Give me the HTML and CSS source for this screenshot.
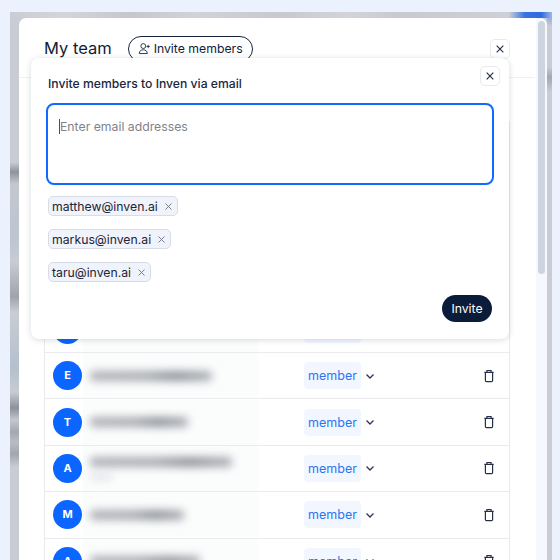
FILE: index.html
```html
<html>
  <head>
    <meta charset="UTF-8" />
    <link rel="stylesheet" href="styles.css">
  </head>
  <body>
    <svg class="defs">
      <symbol id="i-x" viewBox="0 0 12 12"><path d="M2 2l8 8M10 2l-8 8" /></symbol>
      <symbol id="i-chevron" viewBox="0 0 12 12"><path d="M2.5 4.5L6 8l3.5-3.5" /></symbol>
      <symbol id="i-trash" viewBox="0 0 14 16"><path d="M1.5 3.7h11M4.6 3.500V1.600h4.800v1.900M2.800 3.700v9.600c0 .8.500 1.300 1.300 1.300h5.800c.8 0 1.300-.5 1.300-1.300V3.700" /></symbol>
    </svg>

    <div class="backdrop">
      <div class="modal">
        <div class="modal-body">
          <div class="header">
            <div class="heading">My team</div>
            <button class="invite-open">
              <svg class="user-plus" viewBox="0 0 16 16"><circle cx="6.500" cy="5" r="3" /><path d="M1.500 14.200c0-3 2.200-4.600 5-4.600s5 1.600 5 4.600zM12.500 3.500v4M10.500 5.500h4" /></svg>
              Invite members
            </button>
            <button class="close-btn"><svg class="icon-x"><use href="#i-x" /></svg></button>
          </div>

          <div class="table">
            <div class="row">
              <div class="avatar">A</div>
              <div class="name"></div>
              <div class="role">member</div>
              <svg class="chevron"><use href="#i-chevron" /></svg>
              <svg class="trash"><use href="#i-trash" /></svg>
            </div>
            <div class="row">
              <div class="avatar">E</div>
              <div class="name"><span class="smudge" style="width: 122px"></span></div>
              <div class="role">member</div>
              <svg class="chevron"><use href="#i-chevron" /></svg>
              <svg class="trash"><use href="#i-trash" /></svg>
            </div>
            <div class="row">
              <div class="avatar">T</div>
              <div class="name"><span class="smudge" style="width: 98px"></span></div>
              <div class="role">member</div>
              <svg class="chevron"><use href="#i-chevron" /></svg>
              <svg class="trash"><use href="#i-trash" /></svg>
            </div>
            <div class="row">
              <div class="avatar">A</div>
              <div class="name">
                <span class="smudge" style="width: 142px"></span>
                <span class="smudge smudge-small" style="width: 22px"></span>
              </div>
              <div class="role">member</div>
              <svg class="chevron"><use href="#i-chevron" /></svg>
              <svg class="trash"><use href="#i-trash" /></svg>
            </div>
            <div class="row">
              <div class="avatar">M</div>
              <div class="name"><span class="smudge" style="width: 94px"></span></div>
              <div class="role">member</div>
              <svg class="chevron"><use href="#i-chevron" /></svg>
              <svg class="trash"><use href="#i-trash" /></svg>
            </div>
            <div class="row">
              <div class="avatar">A</div>
              <div class="name"><span class="smudge" style="width: 110px"></span></div>
              <div class="role">member</div>
              <svg class="chevron"><use href="#i-chevron" /></svg>
              <svg class="trash"><use href="#i-trash" /></svg>
            </div>
          </div>
        </div>

        <div class="track"><div class="thumb"></div></div>

        <div class="panel">
          <div class="panel-top">
            <div class="panel-title">Invite members to Inven via email</div>
            <button class="close-btn"><svg class="icon-x"><use href="#i-x" /></svg></button>
          </div>
          <div class="email-box"><span class="caret"></span><span class="placeholder">Enter email addresses</span></div>
          <div class="tags">
            <div class="tag">matthew@inven.ai <svg class="tag-x"><use href="#i-x" /></svg></div>
            <div class="tag">markus@inven.ai <svg class="tag-x"><use href="#i-x" /></svg></div>
            <div class="tag">taru@inven.ai <svg class="tag-x"><use href="#i-x" /></svg></div>
          </div>
          <div class="panel-bottom"><button class="invite-send">Invite</button></div>
        </div>
      </div>
    </div>
  </body>
</html>
```

FILE: styles.css
```css
html, body {
  margin: 0;
  padding: 0;
  height: 560px;
  overflow: hidden;
  background: #ebf1fd;
  font-family: Inter, "Liberation Sans", sans-serif;
  color: #0f1d36;
}

button {
  font-family: inherit;
  cursor: pointer;
}

svg path {
  fill: none;
}

.defs {
  display: none;
}

.backdrop {
  margin: 12px 8px 0 10px;
  height: 548px;
  padding: 6px 5px 0 9px;
  box-sizing: border-box;
  background-color: #c9cdd3;
  background-image:
    linear-gradient(90deg, #c9cdd3 0, #d3d5da 10%, #c4c8ce 22%, #d0d3d8 34%, #c6cad0 50%, #d2d4d9 62%, #c7cbd1 72%, #cdd0d6 92%, #3a72de 95%, #2f6be0 98%, #9db5e4 100%),
    linear-gradient(180deg, #c9cdd3 0, #c9cdd3 150px, #8e939b 160px, #c4c8cd 172px, #bcc5d2 225px, #c8ccd2 250px, #a0a4aa 285px, #c9cdd3 300px, #b4c0ce 356px, #c8ccd2 380px, #8c919b 396px, #c4c7cd 408px, #a3a7ae 420px, #b9bdc3 430px, #a2a6ad 442px, #c9cdd3 455px),
    linear-gradient(180deg, #6f95e2 0, #c9cdd3 14px, #c9cdd3 55px, #a4a8ae 65px, #c9cdd3 80px);
  background-size: 100% 6px, 9px 100%, 5px 100%;
  background-position: 0 0, 0 0, 100% 0;
  background-repeat: no-repeat;
}

.modal {
  position: relative;
  display: flex;
  height: 560px;
  background: #fff;
  border-radius: 7px 7px 0 0;
  overflow: hidden;
}

.modal-body {
  flex: 1;
  padding: 0 26px 0 25px;
  min-width: 0;
}

.track {
  width: 11px;
  background: #f5f8ff;
  padding: 3px 2px 0;
  box-sizing: border-box;
}

.thumb {
  width: 7px;
  height: 253px;
  border-radius: 4px;
  background: #cdd5e0;
}

.header {
  height: 60px;
  margin: 0 -25px;
  padding: 0 25px;
  display: flex;
  align-items: flex-start;
  border-bottom: 1.500px solid #eef0f3;
  box-sizing: border-box;
}

.heading {
  font-size: 16.500px;
  line-height: 24px;
  margin-top: 18px;
  margin-right: 16px;
}

.invite-open {
  display: flex;
  align-items: center;
  gap: 3px;
  height: 26px;
  margin-top: 18px;
  padding: 0 9px 1px;
  background: #fff;
  border: 1px solid #17233f;
  border-radius: 13px;
  font-size: 12.250px;
  color: #0f1d36;
}

.user-plus {
  width: 13px;
  height: 13px;
}

.user-plus circle, .user-plus path {
  fill: none;
  stroke: #1b2740;
  stroke-width: 1.100;
}

.close-btn {
  display: flex;
  align-items: center;
  justify-content: center;
  width: 20px;
  height: 20px;
  padding: 0;
  background: #fff;
  border: 1px solid #e8eaee;
  border-radius: 5px;
}

.header .close-btn {
  margin-left: auto;
  margin-top: 21px;
}

.icon-x {
  width: 10px;
  height: 10px;
  stroke: #24304a;
  stroke-width: 1.400;
}

.table {
  margin-top: 43px;
  padding-top: 185.600px;
  border-left: 1.500px solid #e8eaee;
  border-right: 1.500px solid #e8eaee;
}

.row {
  display: flex;
  align-items: center;
  height: 46.400px;
  box-sizing: border-box;
  padding-left: 8px;
  border-bottom: 1.500px solid #e9ebee;
}

.avatar {
  flex: none;
  width: 29px;
  height: 29px;
  border-radius: 50%;
  background: #0a66ff;
  color: #fff;
  font-size: 11px;
  font-weight: 700;
  line-height: 29px;
  text-align: center;
}

.name {
  flex: none;
  width: 168px;
  height: 45px;
  margin-left: 1px;
  padding-left: 7px;
  background: #fbfcfc;
  display: flex;
  flex-direction: column;
  justify-content: center;
  gap: 8px;
}

.smudge {
  display: block;
  height: 10px;
  border-radius: 4px;
  background: linear-gradient(90deg, #aeb1b7, #a9acb2 45%, #8f939a 70%, #aeb1b7);
  filter: blur(4px);
}

.smudge-small {
  height: 4px;
  background: #d3d5d9;
}

.role {
  flex: none;
  margin-left: 46px;
  width: 57px;
  height: 27px;
  line-height: 27px;
  text-align: center;
  border-radius: 4px;
  background: #f2f6ff;
  color: #2a74f6;
  font-size: 12.500px;
}

.chevron {
  width: 12px;
  height: 12px;
  margin-left: 3px;
  stroke: #2b3750;
  stroke-width: 1.300;
}

.trash {
  width: 12px;
  height: 14px;
  margin-left: auto;
  margin-right: 14.500px;
  stroke: #24304a;
  stroke-width: 1.400;
}

.panel {
  position: absolute;
  left: 12px;
  top: 40px;
  width: 478px;
  height: 281px;
  box-sizing: border-box;
  padding: 8px 15px 0 15px;
  background: #fff;
  border-radius: 8px;
  box-shadow: 0 1px 6px rgba(20, 30, 60, 0.16);
}

.panel-top {
  display: flex;
  justify-content: space-between;
  height: 37px;
  padding-left: 2px;
}

.panel-top .close-btn {
  margin-right: -6px;
}

.panel-title {
  font-size: 12.200px;
  font-weight: 500;
  line-height: 36px;
  color: #1a2740;
}

.email-box {
  height: 82px;
  box-sizing: border-box;
  border: 2px solid #0f6bff;
  border-radius: 8px;
  padding: 13px 0 0 11px;
  font-size: 12.250px;
  line-height: 17px;
  display: flex;
}

.caret {
  width: 1px;
  height: 15px;
  margin-top: 1px;
  background: #4a4f58;
}

.placeholder {
  color: #808389;
}

.tags {
  display: flex;
  flex-direction: column;
  align-items: flex-start;
  gap: 13px;
  margin-top: 11px;
  padding-left: 2px;
}

.tag {
  display: flex;
  align-items: center;
  gap: 6px;
  height: 20px;
  box-sizing: border-box;
  padding: 0 4px 0 3px;
  background: #f0f3fa;
  border: 1px solid #d6dcea;
  border-radius: 5px;
  font-size: 12.250px;
  color: #1a2438;
}

.tag-x {
  width: 9px;
  height: 9px;
  stroke: #6b7280;
  stroke-width: 1.200;
}

.panel-bottom {
  display: flex;
  justify-content: flex-end;
  margin-top: 13px;
  padding-right: 2px;
}

.invite-send {
  width: 50px;
  height: 27px;
  padding: 0;
  border: none;
  border-radius: 14px;
  background: #0b1c3a;
  color: #fff;
  font-size: 12.250px;
}
```
